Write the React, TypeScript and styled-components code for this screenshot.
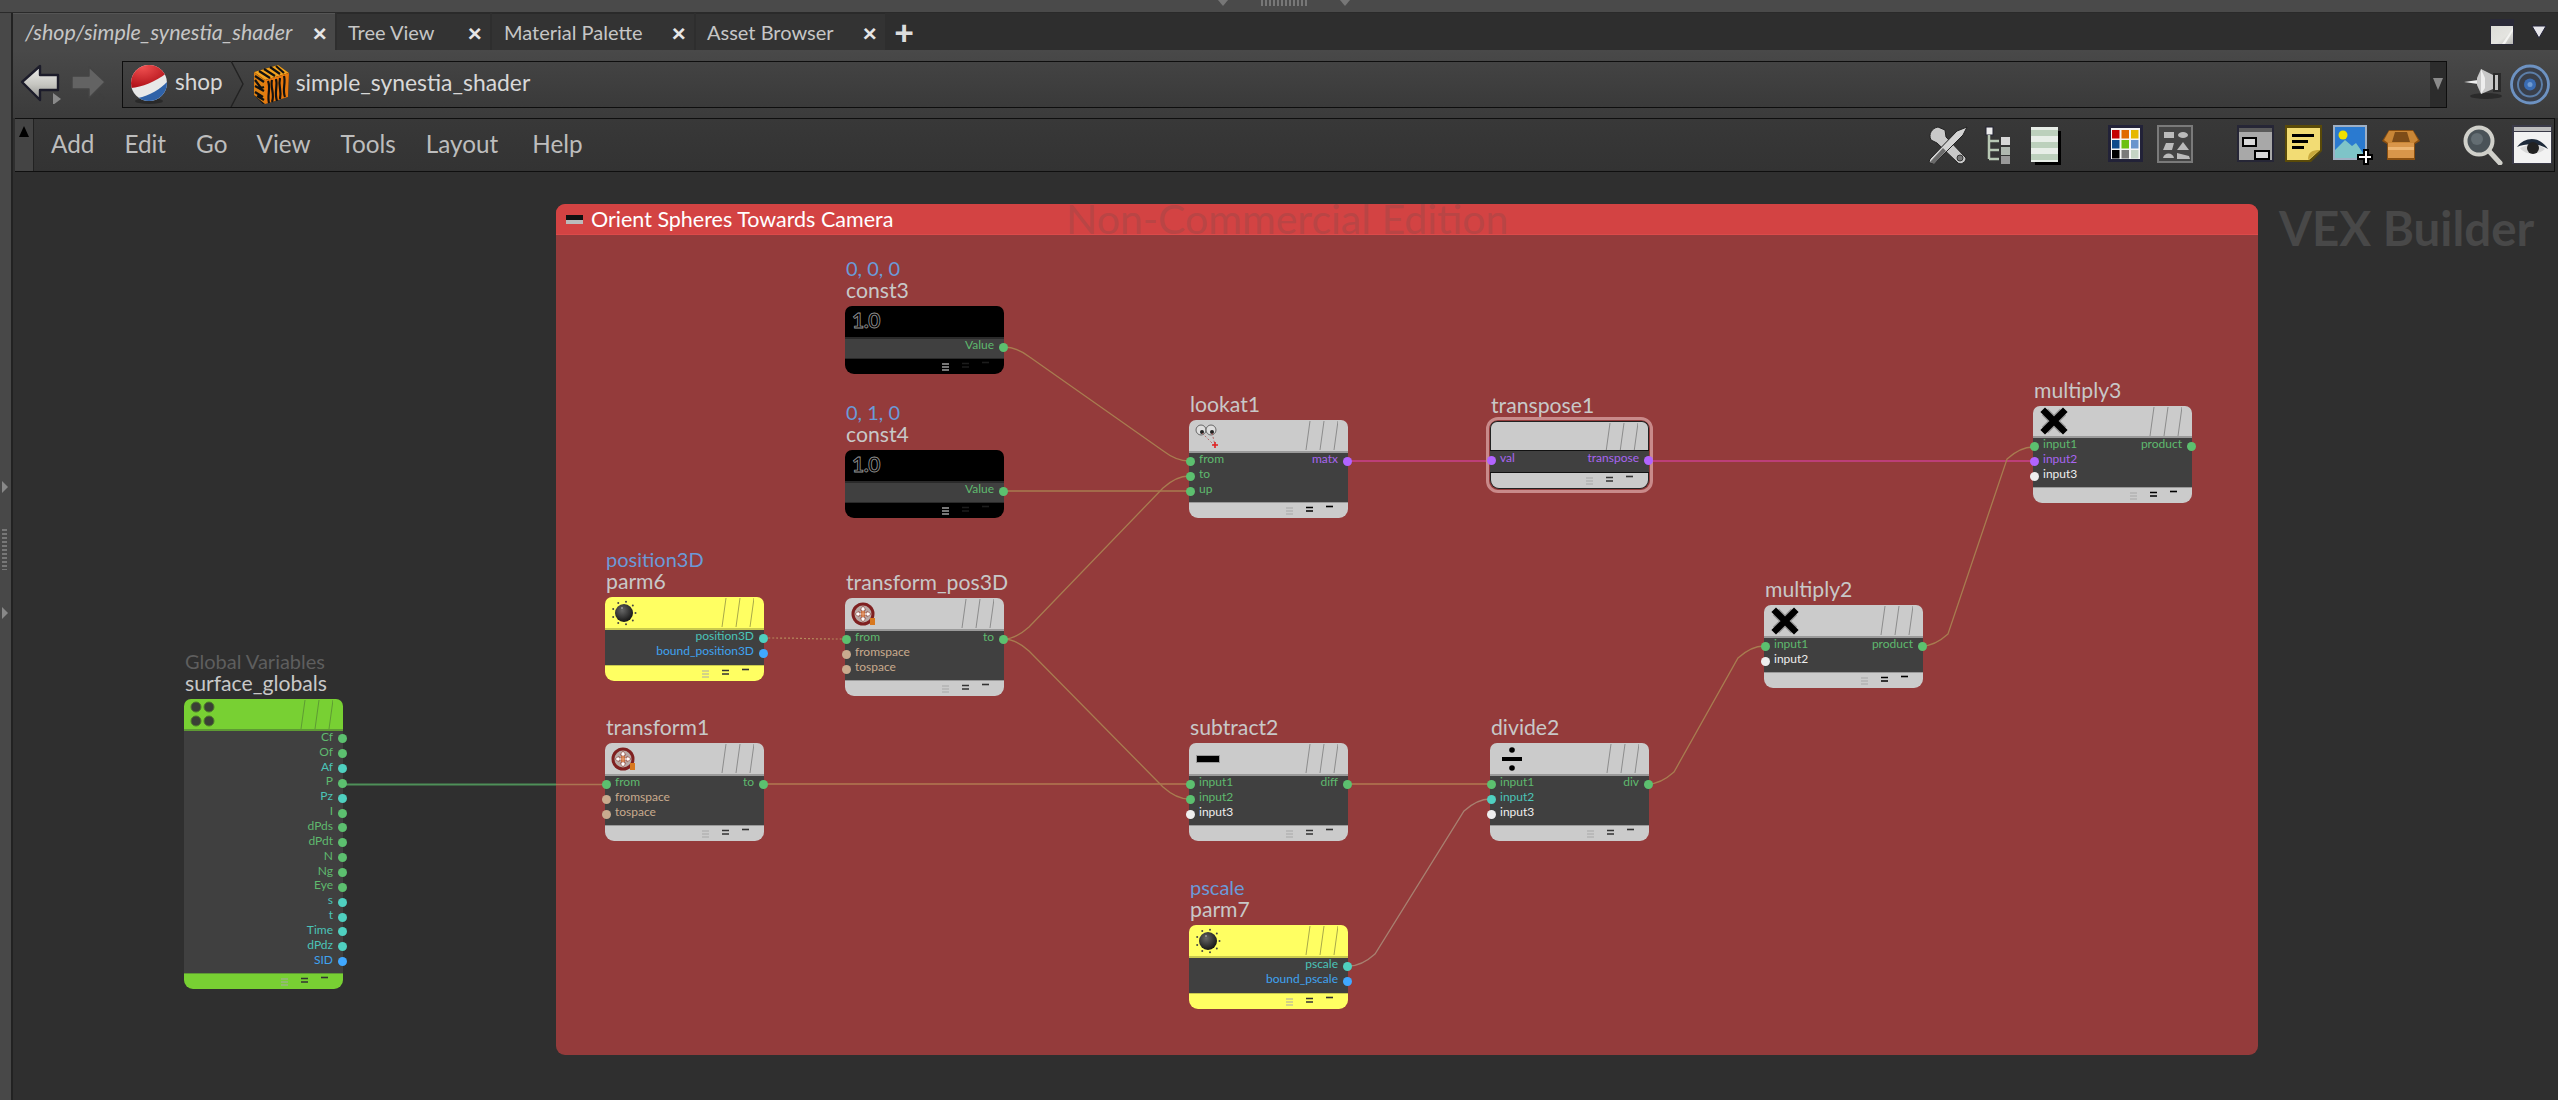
import React from "react";
import styled, { createGlobalStyle, css } from "styled-components";

const FONT = `"Lato", "Noto Sans", sans-serif`;
const OX = 13;
const OY = 172;

const Global = createGlobalStyle`
  html, body { margin: 0; padding: 0; background: #2f2f2f; overflow: hidden; }
  #root { width: 2558px; height: 1100px; }
  * { box-sizing: border-box; }
`;

const Page = styled.div`
  width: 2558px; height: 1100px; display: flex; flex-direction: column;
  font-family: ${FONT}; color: #c8c8c8;
`;
const TopStrip = styled.div`
  height: 13px; background: #4a4a4a; border-bottom: 1px solid #2a2a2a;
  display: flex; align-items: flex-start; justify-content: center; padding-left: 10px;
`;
const TopArrow = styled.div<{ $ml: number }>`
  margin-left: ${p => p.$ml}px; width: 0; height: 0;
  border-left: 5px solid transparent; border-right: 5px solid transparent; border-top: 6px solid #777;
`;
const TopDots = styled.div`
  margin-left: 33px; width: 46px; height: 6px;
  background: repeating-linear-gradient(90deg, #777 0 2px, transparent 2px 4px);
`;
const Shell = styled.div`flex: 1; display: flex; min-height: 0;`;
const LeftStrip = styled.div`
  width: 13px; background: #484848; border-right: 2px solid #222; position: relative;
  display: flex; flex-direction: column; align-items: center; padding-top: 468px;
`;
const SideTri = styled.div<{ $mt: number }>`
  margin-top: ${p => p.$mt}px; margin-right: 2px; width: 0; height: 0;
  border-top: 6px solid transparent; border-bottom: 6px solid transparent; border-left: 6px solid #888;
`;
const SideDots = styled.div`
  margin-top: 36px; margin-right: 2px; width: 5px; height: 41px;
  background: repeating-linear-gradient(180deg, #777 0 2px, transparent 2px 4px);
`;
const Main = styled.div`flex: 1; display: flex; flex-direction: column; min-width: 0;`;

const TabBar = styled.div`height: 37px; background: #2e2e2e; display: flex; align-items: stretch;`;
const Tab = styled.div<{ $w: number; $active?: boolean; $pl?: number }>`
  width: ${p => p.$w}px; margin-right: 2px; display: flex; align-items: center; justify-content: space-between;
  padding: 0 8px 0 ${p => p.$pl ?? 12}px; font-size: ${p => (p.$active ? 21.5 : 20)}px;
  background: ${p => (p.$active ? "#484848" : "#333333")};
  border-top: 1px solid ${p => (p.$active ? "#555" : "#2a2a2a")};
  font-style: ${p => (p.$active ? "italic" : "normal")};
  color: #c6c6c6;
`;
const TabClose = styled.span`font-size: 25px; line-height: 1; font-weight: 900; font-style: normal; color: #e6e6e6;`;
const PlusTab = styled.div`
  width: 30px; display: flex; align-items: center; justify-content: center;
  font-size: 34px; font-weight: 900; color: #dcdcdc; line-height: 1; margin-left: 2px;
`;
const TabRight = styled.div`flex: 1; display: flex; align-items: center; justify-content: flex-end; gap: 17px; padding-right: 11px;`;

const PathBar = styled.div`
  height: 68px; background: linear-gradient(#494949, #3b3b3b); display: flex; align-items: center;
`;
const NavGroup = styled.div`width: 109px; display: flex; align-items: center; padding-left: 7px; gap: 5px;`;
const PathField = styled.div`
  width: 2325px; height: 47px; border: 1px solid #0e0e0e; background: linear-gradient(#434343, #3a3a3a);
  display: flex; align-items: center; position: relative;
`;
const Crumb = styled.div<{ $ml: number; $size: number }>`
  margin-left: ${p => p.$ml}px; font-size: ${p => p.$size}px; color: #d8d8d8; line-height: 1; padding-bottom: 3px;
`;
const IconWrap = styled.div<{ $ml?: number }>`margin-left: ${p => p.$ml ?? 0}px; display: flex; flex: none;`;
const PathDrop = styled.div`
  margin-left: auto; width: 16px; height: 100%; background: #2c2c2c; display: flex; align-items: center; justify-content: center;
`;
const DropTri = styled.div`
  width: 0; height: 0; border-left: 5px solid transparent; border-right: 5px solid transparent; border-top: 12px solid #8a8a8a;
`;
const PathRight = styled.div`flex: 1; display: flex; align-items: center; padding-left: 17px; gap: 8px;`;

const Toolbar = styled.div`
  height: 54px; margin: 0 3px 0 2px; background: linear-gradient(#383838, #333); border-top: 1px solid #0f0f0f; border-bottom: 1px solid #0f0f0f;
  border-right: 1px solid #0f0f0f;
  display: flex; align-items: center;
`;
const Handle = styled.div`
  width: 19px; height: 100%; background: #444; border-right: 1px solid #222; display: flex; justify-content: center; padding-top: 7px;
`;
const HandleTri = styled.div`
  width: 0; height: 0; border-left: 5px solid transparent; border-right: 5px solid transparent; border-bottom: 11px solid #000;
`;
const Menu = styled.div`
  display: flex; gap: 30px; padding: 0 0 3px 17px; font-size: 24.3px; color: #bdbdbd;
  span:last-child { margin-left: 4px; }
  span:nth-child(4) { margin-left: -1px; }
`;
const ToolIcons = styled.div`margin-left: auto; display: flex; align-items: center; padding-right: 2px;`;

const Canvas = styled.div`flex: 1; position: relative; background: #2f2f2f; overflow: hidden;`;
const NetBox = styled.div`
  position: absolute; left: ${556 - OX}px; top: ${204 - OY}px; width: 1702px; height: 851px;
  background: #943b3b; border-radius: 9px;
`;
const NetHeader = styled.div`
  height: 31px; background: #d34343; border-bottom: 1px solid #dc4a4a; display: flex; align-items: center; padding-left: 10px; gap: 8px;
  position: relative; color: #fff; font-size: 21.5px; border-radius: 9px 9px 0 0;
`;
const MinusBox = styled.div`
  width: 17px; height: 9px; background: linear-gradient(#111 0 55%, #bbb 55%); flex: none;
`;
const Watermark = styled.div`
  position: absolute; left: 510px; top: 0; font-size: 41px; color: #b94545; white-space: nowrap; line-height: 30px;
`;
const VexTitle = styled.div`
  position: absolute; left: ${2279 - OX}px; top: ${200 - OY}px; font-size: 47.5px; font-weight: 700; color: #484848; line-height: 56px; white-space: nowrap;
`;
const WireLayer = styled.svg`position: absolute; left: 0; top: 0; width: 100%; height: 100%; pointer-events: none;`;

type Tone = "grey" | "black" | "yellow" | "green";
const toneBg: Record<Tone, string> = { grey: "#cbcbcb", black: "#000", yellow: "#ffff62", green: "#78d033" };
const toneLine: Record<Tone, string> = { grey: "#9a9a9a", black: "#2a2a2a", yellow: "#c9c94e", green: "#5e9a34" };

const NodeBox = styled.div<{ $x: number; $y: number; $selected?: boolean }>`
  position: absolute; left: ${p => p.$x - OX}px; top: ${p => p.$y - OY}px; width: 159px;
  ${p => p.$selected && css`outline: 3px solid #c98a8a; outline-offset: 1px; border-radius: 8px;`}
`;
const Labels = styled.div`
  position: absolute; left: 1px; bottom: 100%; margin-bottom: 5px; display: flex; flex-direction: column; white-space: nowrap;
`;
const NodeName = styled.div`font-size: 21.2px; line-height: 22px; color: #c8c8c8;`;
const NodeHint = styled.div<{ $dim?: boolean }>`
  font-size: 20px; line-height: 22px; color: ${p => (p.$dim ? "#5e5e5e" : "#6b9ad8")};
`;
const NodeHeader = styled.div<{ $tone: Tone; $selected?: boolean; $h: number }>`
  height: ${p => p.$h}px; background: ${p => toneBg[p.$tone]}; border-radius: 7px 7px 0 0; position: relative;
  display: flex; align-items: center; padding-left: 6px;
  ${p => p.$selected && css`border: 1px solid #222; border-bottom: 0;`}
`;
const Stripes = styled.svg`position: absolute; right: 10px; top: 1px; width: 36px; height: 29px;`;
const NodeBody = styled.div<{ $tone: Tone; $h: number; $selected?: boolean }>`
  height: ${p => p.$h}px; background: #404040;
  border-top: ${p => (p.$selected ? "1px solid #111" : `2px solid ${toneLine[p.$tone]}`)};
  ${p => p.$selected && css`border-bottom: 1px solid #111; padding-top: 1px;`}
  position: relative;
`;
const Row = styled.div<{ $h: number }>`
  height: ${p => p.$h}px; position: relative; display: flex; justify-content: space-between; align-items: center;
  padding: 0 10px; font-size: 12px;
`;
const PortText = styled.span<{ $c: string }>`color: ${p => p.$c}; line-height: 1; padding-bottom: 3px;`;
const Port = styled.span<{ $c: string; $side: "l" | "r"; $out?: number }>`
  position: absolute; top: 50%; width: 9px; height: 9px; margin-top: -4px; border-radius: 50%; background: ${p => p.$c};
  ${p => (p.$side === "l" ? `left: ${-4 + (p.$out ?? 0)}px;` : `right: ${-4 + (p.$out ?? 0)}px;`)}
`;
const NodeFooter = styled.div<{ $tone: Tone; $selected?: boolean }>`
  height: 16px; background: ${p => toneBg[p.$tone]}; border-radius: 0 0 9px 9px; position: relative;
  border-top: 1px solid ${p => toneLine[p.$tone]};
  ${p => p.$selected && css`border: 1px solid #222; border-top: 0;`}
`;
const FooterIcons = styled.svg`position: absolute; right: 10px; top: 1px; width: 52px; height: 13px;`;
const ConstMark = styled.span`
  font-size: 21px; font-weight: 700; color: #000; -webkit-text-stroke: 0.8px #9a9a9a; letter-spacing: -0.5px; line-height: 1; padding-left: 1px; margin-top: -4px;
`;

/* ------------ icons ------------- */
const Knob = () => (
  <svg width="26" height="26" viewBox="0 0 26 26">
    <defs><radialGradient id="kn" cx=".4" cy=".35" r=".7"><stop offset="0" stopColor="#666" /><stop offset="1" stopColor="#111" /></radialGradient></defs>
    {[...Array(9)].map((_, i) => {
      const a = (i / 9) * Math.PI * 2;
      return <circle key={i} cx={13 + 11.5 * Math.cos(a)} cy={13 + 11.5 * Math.sin(a)} r="1" fill="#444" />;
    })}
    <circle cx="13" cy="13" r="9" fill="url(#kn)" />
    <circle cx="11" cy="8" r="1" fill="#999" />
  </svg>
);
const XformIcon = () => (
  <svg width="26" height="26" viewBox="0 0 26 26">
    <circle cx="12" cy="13" r="11.5" fill="#7f2020" />
    <circle cx="12" cy="13" r="8.5" fill="#b9aaa6" />
    <path d="M12 5l3 4h-2v3h3v-2l4 3-4 3v-2h-3v3h2l-3 4-3-4h2v-3H8v2l-4-3 4-3v2h3V9H9z" fill="#fff" stroke="#8a3a30" strokeWidth=".6" />
    <path d="M10 10h4v6h-4z" fill="#d36a2a" opacity=".7" />
    <rect x="19" y="17" width="5" height="7" fill="#d8781e" />
  </svg>
);
const EyesIcon = () => (
  <svg width="26" height="26" viewBox="0 0 26 26">
    <circle cx="6" cy="7" r="5" fill="#ddd" stroke="#666" />
    <circle cx="16" cy="7" r="5" fill="#ddd" stroke="#666" />
    <circle cx="7" cy="9" r="2" fill="#222" />
    <circle cx="17" cy="9" r="2" fill="#222" />
    <path d="M7 10l12 12M17 10l3 12" stroke="#b05050" strokeDasharray="2 2" strokeWidth=".8" />
    <path d="M20 19v6M17 22h6" stroke="#e02020" strokeWidth="1.6" />
  </svg>
);
const MinusIcon = () => (
  <svg width="26" height="26" viewBox="0 0 26 26"><rect x="1.5" y="9.5" width="23" height="7" fill="#000" stroke="#999" strokeWidth="1" /></svg>
);
const DivideIcon = () => (
  <svg width="26" height="26" viewBox="0 0 26 26" style={{ marginLeft: 3 }}>
    <rect x="3" y="11" width="20" height="4" fill="#000" />
    <circle cx="13" cy="4" r="2.8" fill="#000" />
    <circle cx="13" cy="22" r="2.8" fill="#000" />
  </svg>
);
const TimesIcon = () => (
  <svg width="28" height="28" viewBox="0 0 28 28" style={{ marginLeft: 1 }}>
    <path d="M5 5l18 18M23 5L5 23" stroke="#999" strokeWidth="9" />
    <path d="M5 5l18 18M23 5L5 23" stroke="#000" strokeWidth="6.5" strokeLinecap="square" />
  </svg>
);
const DotsIcon = () => (
  <svg width="26" height="28" viewBox="0 0 26 28" style={{ marginLeft: -1 }}>
    {[[7, 7], [20, 7], [7, 21], [20, 21]].map(([x, y]) => (
      <circle key={x * 100 + y} cx={x} cy={y} r="5" fill="#3a3f36" stroke="#4f7a2b" />
    ))}
  </svg>
);
const BackArrow = () => (
  <svg width="44" height="40" viewBox="0 0 44 40">
    <defs><linearGradient id="ba" x1="0" y1="0" x2="0" y2="1"><stop offset="0" stopColor="#f0f0ee" /><stop offset=".55" stopColor="#c5c5c0" /><stop offset="1" stopColor="#8f8f8c" /></linearGradient></defs>
    <path d="M2 18L20 2v9h18v15H20v10z" fill="url(#ba)" stroke="#1c1c2a" strokeWidth="2.4" strokeLinejoin="round" />
    <path d="M33 29l8 6-8 6z" fill="#8a8a8a" />
  </svg>
);
const ForwardArrow = () => (
  <svg width="44" height="40" viewBox="0 0 44 40">
    <path d="M36 18L20 3v9H3v13h17v9z" fill="#636363" stroke="#444" strokeWidth="1.4" strokeLinejoin="round" />
    <path d="M30 29l6 5-6 5z" fill="#3f3f3f" />
  </svg>
);
const BallIcon = () => (
  <svg width="38" height="40" viewBox="0 0 38 40">
    <defs>
      <clipPath id="bc"><circle cx="19" cy="19" r="18" /></clipPath>
      <radialGradient id="br" cx=".35" cy=".2" r=".8"><stop offset="0" stopColor="#f05050" /><stop offset="1" stopColor="#b01018" /></radialGradient>
    </defs>
    <ellipse cx="19" cy="37" rx="14" ry="3" fill="#222" opacity=".7" />
    <g clipPath="url(#bc)">
      <rect width="38" height="38" fill="#e8e8e8" />
      <path d="M-1 24C10 24 26 18 38 8V-2H-1z" fill="url(#br)" />
      <path d="M8 34C20 32 32 24 38 17V40H8z" fill="#2f62a8" />
    </g>
  </svg>
);
const TigerIcon = () => (
  <svg width="38" height="42" viewBox="0 0 38 42">
    <path d="M2 9L26 2l11 8-1 24-25 7-9-9z" fill="#111" />
    <path d="M2 9L26 2l11 8-24 7z" fill="#f2a21e" />
    <path d="M13 17l24-7-1 24-23 7z" fill="#e8780e" />
    <path d="M2 9l11 8v24L2 32z" fill="#dd7f12" />
    <path d="M7 8l11 7M12 6l11 7M18 4l10 7M24 3l8 7M16 18c3 7-1 14 1 22M20 17c-2 7 3 14 0 22M24 16c2 7-2 13 1 22M28 15c-2 8 2 13 0 21M32 13c2 7-2 14 1 21M3 13l9 6M3 17l6 8 3-1M3 23l9 5M3 29l8 5M5 33l7 4" stroke="#111" strokeWidth="2.2" fill="none" />
  </svg>
);
const Chevron = () => (
  <svg width="14" height="46" viewBox="0 0 14 46"><path d="M1 0l12 23L1 46" fill="none" stroke="#222" strokeWidth="1.4" /></svg>
);
const PaneIcon = () => (
  <svg width="24" height="26" viewBox="0 0 24 26">
    <rect width="24" height="26" fill="#2a2a38" />
    <defs><linearGradient id="pn" x1="0" y1="0" x2="1" y2="1"><stop offset="0" stopColor="#dcdcd8" /><stop offset=".6" stopColor="#e4e4e0" /><stop offset="1" stopColor="#b8b8b4" /></linearGradient></defs>
    <rect x="1" y="7" width="22" height="18" fill="url(#pn)" />
    <path d="M12 25L23 9v3L15 25z" fill="#f4f4f2" />
  </svg>
);
const DownTri = () => (
  <svg width="16" height="14" viewBox="0 0 16 14"><path d="M1 1h14L8 13z" fill="#e6e6ea" stroke="#222238" /></svg>
);
const PinIcon = () => (
  <svg width="38" height="34" viewBox="0 0 38 34">
    <ellipse cx="22" cy="29" rx="16" ry="3" fill="#2a2a2a" />
    <path d="M0 15l14-2v4z" fill="#eee" />
    <path d="M13 11L17 2l12 6v14l-12 5-4-9z" fill="#c8c8c8" />
    <path d="M17 2l4 9v10l-4 6z" fill="#eee" />
    <rect x="29" y="6" width="8" height="19" fill="#2a2a2a" />
    <rect x="31" y="8" width="3" height="15" fill="#c2c2c2" />
  </svg>
);
const TargetIcon = () => (
  <svg width="40" height="41" viewBox="0 0 40 41">
    <circle cx="20" cy="20.5" r="18.5" fill="#3a3f4a" stroke="#6d92c2" strokeWidth="2.8" />
    <circle cx="20" cy="20.5" r="12" fill="#3a3f4a" stroke="#5c7ea8" strokeWidth="2" />
    <circle cx="20" cy="20.5" r="6" fill="#3a6cb4" />
    <circle cx="20" cy="20.5" r="2.5" fill="#6f9ad2" />
  </svg>
);

const T: React.FC<{ w: number; h?: number; ml: number; children: React.ReactNode }> = ({ w, h = 40, ml, children }) => (
  <IconWrap $ml={ml}>
    <svg width={w} height={h} viewBox={`0 0 ${w} ${h}`}>{children}</svg>
  </IconWrap>
);
const gridColors = ["#c40000", "#e06a00", "#e6b800", "#0f4a8a", "#6cc010", "#6a94cc", "#000", "#7a7a7a", "#c4d4c4"];
const shapes = (
  <>
    <rect x="1" y="1" width="34" height="36" fill="#444" stroke="#7a7a7a" strokeWidth="2" />
    <rect x="7" y="7" width="10" height="6" fill="#bbb" />
    <ellipse cx="26" cy="10" rx="5" ry="3" fill="#bbb" />
    <path d="M9 18h8l-2 7H6z" fill="#bbb" />
    <path d="M26 17l6 8H20z" fill="#bbb" />
    <path d="M6 33c1-6 10-6 11 0z" fill="#bbb" />
    <path d="M20 28l12 3 1 3H20z" fill="#bbb" />
  </>
);
const ToolIconSet = () => (
  <ToolIcons>
    <T w={40} ml={0}>
      <path d="M10 2C4 3 0 9 3 15l6 3 21 20c2 2 8 0 8-5L18 12l-1-7z" fill="#c9c9c9" stroke="#222" strokeWidth="1" />
      <path d="M39 2l-4 8L9 36c-2 3-7 2-8 1l1-3 27-28z" fill="#d4d4d4" stroke="#222" strokeWidth="1" />
      <path d="M2 37l13-14 3 3L6 39z" fill="#6a6a6a" />
      <circle cx="32" cy="33" r="3" fill="#777" stroke="#333" />
    </T>
    <T w={26} ml={17}>
      <rect x="1" y="2" width="7" height="8" fill="#eee" stroke="#223" />
      <path d="M4 10v24M4 16h10M4 25h10M4 34h10" stroke="#b8c8b4" strokeWidth="2.5" fill="none" />
      <rect x="16" y="12" width="9" height="8" fill="#d8d8d8" />
      <rect x="16" y="22" width="9" height="8" fill="#b0b8b0" />
      <rect x="16" y="31" width="9" height="8" fill="#999" />
    </T>
    <T w={32} ml={18}>
      <rect x="2" y="2" width="27" height="35" fill="#e8eee8" />
      <rect x="29" y="6" width="3" height="34" fill="#000" />
      <rect x="6" y="37" width="26" height="3" fill="#000" />
      <path d="M2 5h27v6H2zM2 17h27v6H2zM2 29h27v6H2z" fill="#bcd0bc" />
    </T>
    <T w={35} ml={47}>
      <rect x="0" y="0" width="35" height="37" fill="#222238" />
      <rect x="3" y="3" width="29" height="31" fill="#f4f4f4" />
      {gridColors.map((c, i) => (
        <rect key={c} x={4 + (i % 3) * 9.5} y={5 + Math.floor(i / 3) * 10} width="7.5" height="8.5" fill={c} />
      ))}
    </T>
    <T w={36} ml={14}>{shapes}</T>
    <T w={37} ml={44}>
      <rect x="0" y="0" width="37" height="37" fill="#262636" />
      <rect x="2" y="3" width="33" height="32" fill="#a8a8a8" />
      <rect x="2" y="3" width="33" height="4" fill="#5a5a5a" />
      <rect x="5" y="12" width="15" height="10" fill="#000" />
      <rect x="7" y="14" width="11" height="6" fill="#d8d8d8" />
      <rect x="17" y="25" width="16" height="10" fill="#000" />
      <rect x="19" y="27" width="12" height="6" fill="#d8d8d8" />
    </T>
    <T w={37} ml={11}>
      <path d="M0 0h37v26L26 37H0z" fill="#5a4a08" />
      <path d="M2 3h33v22L24 35H2z" fill="#f2dc74" />
      <path d="M23 35c0-8 4-10 12-10z" fill="#c8a83c" />
      <rect x="7" y="9" width="22" height="3" fill="#000" />
      <rect x="7" y="15" width="16" height="3" fill="#000" />
      <rect x="7" y="21" width="12" height="3" fill="#000" />
    </T>
    <T w={40} ml={11}>
      <rect x="0" y="0" width="34" height="35" fill="#9fb0c4" />
      <rect x="2" y="2" width="30" height="31" fill="#2a7ad0" />
      <circle cx="10" cy="10" r="4.5" fill="#f0e000" />
      <path d="M2 33V25l10-10 7 6 4-3 9 13v2z" fill="#7ec4c8" />
      <path d="M24 29h6v-5h6v5h4v6h-4v5h-6v-5h-6z" fill="#000" />
      <path d="M26 31h6v-5h2v5h4v2h-4v5h-2v-5h-6z" fill="#fff" />
    </T>
    <T w={40} ml={8} h={34}>
      <path d="M1 13L8 2h24l7 11-5 3v16H6V16z" fill="#8a4f10" />
      <path d="M7 15h26v15H7z" fill="#d9964a" />
      <path d="M7 19h26v3H7z" fill="#edb673" />
      <path d="M8 3h24l5 9-4 3H7l-4-3z" fill="#c98636" />
      <path d="M14 4h12l3 10H11z" fill="#7d4c18" />
    </T>
    <T w={40} ml={42}>
      <circle cx="16" cy="16" r="13.5" fill="#4a5358" stroke="#d0d0ca" strokeWidth="4" />
      <circle cx="14" cy="14" r="6" fill="#636d72" />
      <path d="M26 26l11 12" stroke="#d0d0ca" strokeWidth="5" strokeLinecap="round" />
    </T>
    <T w={40} ml={9}>
      <rect x="0" y="0" width="40" height="39" fill="#3a3a48" />
      <rect x="2" y="7" width="37" height="31" fill="#f2f2f2" />
      <rect x="2" y="2" width="37" height="4" fill="#bcbcbc" />
      <path d="M5 22c8-11 23-11 31 2-9-6-22-6-31-2z" fill="#1e2a3a" />
      <path d="M8 23c8-4 19-4 25 1-6 6-19 7-25-1z" fill="#d8d8d8" />
      <circle cx="21" cy="23" r="6" fill="#222" />
    </T>
  </ToolIcons>
);

/* ------------ data ------------- */
const G = "#5cc06f", GT = "#5fb96e", TL = "#4fd0c0", TLT = "#4bc4b8", BL = "#40a8ff", BLT = "#3fa3f0";
const PU = "#b264ff", PUT = "#a865f0", TA = "#c9ab8e", WH = "#eeeeee";

type P = { t: string; c: string; tc?: string; out?: number };
type R = { l?: P; r?: P };
type N = {
  x: number; y: number; name: string; hint?: string; dim?: boolean; tone?: Tone; icon?: React.ReactNode;
  rows: R[]; rowH?: number; bodyH: number; headH?: number; selected?: boolean; tri?: string; dbl?: string; sgl?: string;
};
const L = (t: string, c = G, tc?: string, out = 0): R => ({ l: { t, c, tc: tc ?? (c === G ? GT : c === PU ? PUT : c === TL ? TLT : c), out } });
const pair = (lt: string, lc: string, rt: string, rc: string): R => ({
  l: { t: lt, c: lc, tc: lc === G ? GT : lc === PU ? PUT : lc },
  r: { t: rt, c: rc, tc: rc === G ? GT : rc === PU ? PUT : rc },
});
const Out = (t: string, c = G): R => ({ r: { t, c, tc: c === G ? GT : c === TL ? TLT : c === BL ? BLT : c } });

const sg: [string, string][] = [["Cf", G], ["Of", G], ["Af", TL], ["P", G], ["Pz", TL], ["I", G], ["dPds", G], ["dPdt", G], ["N", G], ["Ng", G], ["Eye", G], ["s", TL], ["t", TL], ["Time", TL], ["dPdz", TL], ["SID", BL]];

const nodes: N[] = [
  { x: 184, y: 699, name: "surface_globals", hint: "Global Variables", dim: true, tone: "green", icon: <DotsIcon />, rows: sg.map(([t, c]) => Out(t, c)), rowH: 14.85, bodyH: 244, headH: 30 },
  { x: 845, y: 306, name: "const3", hint: "0, 0, 0", tone: "black", icon: <ConstMark>1.0</ConstMark>, rows: [Out("Value")], bodyH: 21, tri: "#eee", dbl: "#1c1c1c", sgl: "#1c1c1c" },
  { x: 845, y: 450, name: "const4", hint: "0, 1, 0", tone: "black", icon: <ConstMark>1.0</ConstMark>, rows: [Out("Value")], bodyH: 21, tri: "#eee", dbl: "#1c1c1c", sgl: "#1c1c1c" },
  { x: 1189, y: 420, name: "lookat1", icon: <EyesIcon />, rows: [pair("from", G, "matx", PU), L("to"), L("up")], bodyH: 51, dbl: "#000", sgl: "#000" },
  { x: 1490, y: 421, name: "transpose1", selected: true, rows: [pair("val", PU, "transpose", PU)], bodyH: 23, headH: 29, dbl: "#333", sgl: "#333" },
  { x: 2033, y: 406, name: "multiply3", icon: <TimesIcon />, rows: [pair("input1", G, "product", G), L("input2", PU), L("input3", WH)], bodyH: 51, headH: 30, dbl: "#000", sgl: "#000" },
  { x: 605, y: 597, name: "parm6", hint: "position3D", tone: "yellow", icon: <Knob />, rows: [Out("position3D", TL), Out("bound_position3D", BL)], bodyH: 37, tri: "#aaa" , dbl: "#333", sgl: "#333" },
  { x: 845, y: 598, name: "transform_pos3D", icon: <XformIcon />, rows: [pair("from", G, "to", G), L("fromspace", TA), L("tospace", TA)], bodyH: 51, dbl: "#333", sgl: "#333" },
  { x: 605, y: 743, name: "transform1", icon: <XformIcon />, rows: [pair("from", G, "to", G), L("fromspace", TA), L("tospace", TA)], bodyH: 51, dbl: "#333", sgl: "#333" },
  { x: 1189, y: 743, name: "subtract2", icon: <MinusIcon />, rows: [pair("input1", G, "diff", G), L("input2"), L("input3", WH)], bodyH: 51, dbl: "#333", sgl: "#333" },
  { x: 1490, y: 743, name: "divide2", icon: <DivideIcon />, rows: [pair("input1", G, "div", G), L("input2", TL), L("input3", WH)], bodyH: 51, dbl: "#333", sgl: "#333" },
  { x: 1764, y: 605, name: "multiply2", icon: <TimesIcon />, rows: [pair("input1", G, "product", G), L("input2", WH)], bodyH: 36, dbl: "#000", sgl: "#000" },
  { x: 1189, y: 925, name: "parm7", hint: "pscale", tone: "yellow", icon: <Knob />, rows: [Out("pscale", TL), Out("bound_pscale", BL)], bodyH: 37, tri: "#aaa", dbl: "#333", sgl: "#333" },
];

const NodeView: React.FC<{ n: N }> = ({ n }) => {
  const tone = n.tone ?? "grey";
  const isGreen = tone === "green";
  return (
    <NodeBox $x={n.x} $y={n.y} $selected={n.selected}>
      <Labels>
        {n.hint && <NodeHint $dim={n.dim}>{n.hint}</NodeHint>}
        <NodeName>{n.name}</NodeName>
      </Labels>
      <NodeHeader $tone={tone} $selected={n.selected} $h={n.headH ?? 31}>
        {n.icon}
        <Stripes viewBox="0 0 36 29">
          {[4, 18, 32].map(x => (
            <line key={x} x1={x} y1="29" x2={x + 4} y2="0" stroke={tone === "black" ? "#000" : isGreen ? "#5e9a34" : tone === "yellow" ? "#a8a84a" : "#8c8c8c"} strokeWidth="1" />
          ))}
        </Stripes>
      </NodeHeader>
      <NodeBody $tone={tone} $h={n.bodyH} $selected={n.selected}>
        {n.rows.map((r, i) => (
          <Row key={i} $h={n.rowH ?? 15}>
            <PortText $c={r.l?.tc ?? "#fff"}>{r.l?.t}</PortText>
            <PortText $c={r.r?.tc ?? "#fff"}>{r.r?.t}</PortText>
            {r.l && <Port $c={r.l.c} $side="l" $out={1} />}
            {r.r && <Port $c={r.r.c} $side="r" />}
          </Row>
        ))}
      </NodeBody>
      <NodeFooter $tone={tone} $selected={n.selected}>
        <FooterIcons viewBox="0 0 52 13">
          <path d="M0 4h7M0 7h7M0 10h7" stroke={n.tri ?? "#a8a8a8"} strokeWidth="1.2" />
          <path d="M20 3.5h7M20 7h7" stroke={n.dbl ?? "#333"} strokeWidth="1.6" />
          <path d="M40 2.5h7" stroke={n.sgl ?? "#333"} strokeWidth="1.6" />
        </FooterIcons>
      </NodeFooter>
    </NodeBox>
  );
};

const wire = (x0: number, y0: number, x1: number, y1: number) => {
  const a = [x0 - OX, y0 - OY, x1 - OX, y1 - OY];
  const [ax, ay, bx, by] = a;
  if (ay === by) return `M${ax} ${ay}L${bx} ${by}`;
  const dy = by - ay;
  const t = Math.sign(dy) * Math.min(Math.abs(dy) * 0.09, 12);
  return `M${ax} ${ay}C${ax + 10} ${ay} ${ax + 18} ${ay + t * 0.4} ${ax + 26} ${ay + t}L${bx - 26} ${by - t}C${bx - 18} ${by - t * 0.4} ${bx - 10} ${by} ${bx} ${by}`;
};
const tan = "#a87c50";
const wires: [number, number, number, number, string, number, string?][] = [
  [342, 784.5, 556, 784.5, "#4e9059", 2],
  [556, 784.5, 605, 784.5, "#ab7552", 1.6],
  [764, 784, 1189, 784, "#b27a52", 1.6],
  [1004, 347, 1189, 461, tan, 1.3],
  [1004, 491, 1189, 491, tan, 1.5],
  [1003, 639, 1189, 476, tan, 1.3],
  [1003, 639, 1189, 799, tan, 1.3],
  [764, 638, 845, 639, "#b58a5c", 1.2, "2 2"],
  [1348, 461, 1490, 461, "#bc3f78", 2.2],
  [1650, 461, 2033, 461, "#bc3f78", 2.2],
  [1348, 784, 1490, 784, "#b27a52", 1.6],
  [1349, 966, 1490, 799, "#a88070", 1.3],
  [1648, 784, 1764, 646, tan, 1.3],
  [1922, 646, 2033, 447, tan, 1.3],
];

export default function App() {
  return (
    <Page>
      <Global />
      <TopStrip>
        <TopArrow $ml={0} />
        <TopDots />
        <TopArrow $ml={33} />
      </TopStrip>
      <Shell>
        <LeftStrip>
          <SideTri $mt={0} />
          <SideDots />
          <SideTri $mt={37} />
        </LeftStrip>
        <Main>
          <TabBar>
            <Tab $w={322} $active>/shop/simple_synestia_shader<TabClose>×</TabClose></Tab>
            <Tab $w={153} $pl={11}>Tree View<TabClose>×</TabClose></Tab>
            <Tab $w={202} $pl={12}>Material Palette<TabClose>×</TabClose></Tab>
            <Tab $w={189} $pl={11}>Asset Browser<TabClose>×</TabClose></Tab>
            <PlusTab>+</PlusTab>
            <TabRight><PaneIcon /><DownTri /></TabRight>
          </TabBar>
          <PathBar>
            <NavGroup><BackArrow /><ForwardArrow /></NavGroup>
            <PathField>
              <IconWrap $ml={7}><BallIcon /></IconWrap>
              <Crumb $ml={7} $size={22.5}>shop</Crumb>
              <IconWrap $ml={7}><Chevron /></IconWrap>
              <IconWrap $ml={8}><TigerIcon /></IconWrap>
              <Crumb $ml={6} $size={22.9}>simple_synestia_shader</Crumb>
              <PathDrop><DropTri /></PathDrop>
            </PathField>
            <PathRight><PinIcon /><TargetIcon /></PathRight>
          </PathBar>
          <Toolbar>
            <Handle><HandleTri /></Handle>
            <Menu>
              {["Add", "Edit", "Go", "View", "Tools", "Layout", "Help"].map(m => <span key={m}>{m}</span>)}
            </Menu>
            <ToolIconSet />
          </Toolbar>
          <Canvas />
        </Main>
      </Shell>
      <CanvasLayer />
    </Page>
  );
}

const Overlay = styled(Canvas)`
  position: absolute; left: ${OX}px; top: ${OY}px; width: ${2558 - OX}px; height: ${1100 - OY}px;
`;
function CanvasLayer() {
  return (
    <Overlay>
      <NetBox>
        <NetHeader>
          <MinusBox />
          <span>Orient Spheres Towards Camera</span>
          <Watermark>Non-Commercial Edition</Watermark>
        </NetHeader>
      </NetBox>
      <VexTitle>VEX Builder</VexTitle>
      <WireLayer>
        {wires.map((w, i) => (
          <path key={i} d={wire(w[0], w[1], w[2], w[3])} fill="none" stroke={w[4]} strokeWidth={w[5]} strokeDasharray={w[6]} />
        ))}
      </WireLayer>
      {nodes.map(n => <NodeView key={n.name} n={n} />)}
    </Overlay>
  );
}
